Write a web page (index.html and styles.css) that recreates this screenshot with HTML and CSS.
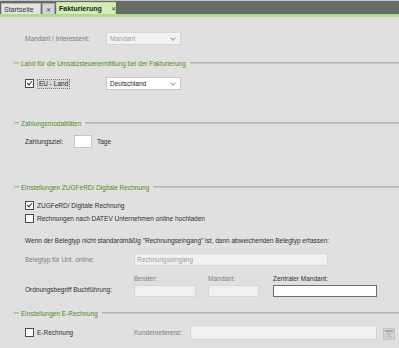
FILE: index.html
```
<!DOCTYPE html>
<html lang="de">
  <head>
    <meta charset="UTF-8" />
    <meta name="viewport" content="width=device-width, initial-scale=1.0" />
    <title>Fakturierung</title>
    <link rel="stylesheet" href="styles.css">
  </head>
  <body>
    <div class="tabbar">
      <div class="tab">Startseite</div>
      <div class="tab-close">&#x2715;</div>
      <div class="tab tab--active">Fakturierung <span class="tab__x">&#x2715;</span></div>
    </div>

    <div class="form">
      <div class="row row--mandant">
        <span class="label label--muted label--wide">Mandant / Interessent:</span>
        <div class="select select--disabled">Mandant <span class="chevron"></span></div>
      </div>

      <div class="section section--1"><span>Land für die Umsatzsteuerermittlung bei der Fakturierung</span></div>
      <div class="row row--land">
        <label class="check check--wide">
          <span class="box box--checked"></span>
          <span class="focus">EU - Land</span>
        </label>
        <div class="select">Deutschland <span class="chevron"></span></div>
      </div>

      <div class="section section--2"><span>Zahlungsmodalitäten</span></div>
      <div class="row row--ziel">
        <span class="label label--short">Zahlungsziel:</span>
        <div class="input input--days"></div>
        <span class="unit">Tage</span>
      </div>

      <div class="section section--3"><span>Einstellungen ZUGFeRD/ Digitale Rechnung</span></div>
      <label class="check row--check1">
        <span class="box box--checked"></span>
        <span>ZUGFeRD/ Digitale Rechnung</span>
      </label>
      <label class="check row--check2">
        <span class="box"></span>
        <span>Rechnungen nach DATEV Unternehmen online hochladen</span>
      </label>
      <p class="hint">Wenn der Belegtyp nicht standardmäßig "Rechnungseingang" ist, dann abweichenden Belegtyp erfassen:</p>
      <div class="row row--beleg">
        <span class="label label--muted label--col">Belegtyp für Unt. online:</span>
        <div class="input input--disabled input--beleg">Rechnungseingang</div>
      </div>
      <div class="ordnung">
        <span class="label ordnung__label">Ordnungsbegriff Buchführung:</span>
        <span class="label label--muted ordnung__berater">Berater:</span>
        <span class="label label--muted ordnung__mandant">Mandant:</span>
        <span class="label ordnung__zentral">Zentraler Mandant:</span>
        <div class="input input--disabled ordnung__in1"></div>
        <div class="input input--disabled ordnung__in2"></div>
        <div class="input input--active ordnung__in3"></div>
      </div>

      <div class="section section--4"><span>Einstellungen E-Rechnung</span></div>
      <div class="row row--erech">
        <label class="check check--col">
          <span class="box"></span>
          <span>E-Rechnung</span>
        </label>
        <span class="label label--muted label--ref">Kundenreferenz:</span>
        <div class="input input--disabled input--ref"></div>
        <div class="icon-btn">
          <svg width="10" height="10" viewBox="0 0 10 10">
            <rect x="1" y="1" width="8" height="2" fill="#a8a8a8" />
            <path d="M2 4 L8 4 L5 7 Z" fill="#b8b8b8" />
            <rect x="3" y="7" width="5" height="2" fill="#c4c4c4" />
          </svg>
        </div>
      </div>
    </div>
  </body>
</html>
```
FILE: styles.css
```
body {
  margin: 0;
  padding: 0;
  background: #e0e0e0;
  font-family: "Liberation Sans", Arial, sans-serif;
  font-size: 6.5px;
  color: #2e2e2e;
  width: 399px;
  height: 348px;
  overflow: hidden;
}

/* tab strip */
.tabbar {
  display: flex;
  align-items: flex-end;
  height: 13px;
  border-top: 1px solid #c4c4c4;
  background: #676b67;
  border-bottom: 3px solid #b2da92;
  padding-left: 1px;
}

.tab {
  height: 11px;
  width: 40px;
  padding-left: 2px;
  box-sizing: border-box;
  background: #e4e4e4;
  border: 1px solid #b8b8b8;
  border-bottom: none;
  display: flex;
  align-items: center;
  color: #333;
  font-size: 7px;
}

.tab-close {
  width: 13px;
  height: 11px;
  margin-left: 1px;
  box-sizing: border-box;
  background: #d4d4d4;
  border: 1px solid #a8a8a8;
  border-bottom: none;
  display: flex;
  align-items: center;
  justify-content: center;
  font-size: 6px;
  color: #444;
}

.tab--active {
  width: 60px;
  height: 12px;
  margin-left: 1px;
  background: #d4ecb6;
  border-color: #c0dca0;
  font-weight: bold;
  color: #222;
  padding-left: 2px;
}

.tab__x {
  margin-left: 9px;
  font-weight: normal;
  font-size: 6px;
  color: #444;
}

/* form */
.form {
  padding-left: 25px;
}

.row {
  display: flex;
  align-items: center;
}

.label--wide {
  width: 81px;
}

.label--short {
  width: 49px;
}

.label--col {
  width: 109px;
}

.label--muted {
  color: #7c7c7c;
}

.row--mandant {
  margin-top: 15px;
  height: 13px;
}

.select {
  position: relative;
  width: 75px;
  height: 13px;
  box-sizing: border-box;
  border: 1px solid #c6c6c6;
  background: #fff;
  padding-left: 3px;
  display: flex;
  align-items: center;
  color: #222;
}

.select--disabled {
  background: #f2f2f2;
  border-color: #d6d6d6;
  color: #a4a4a4;
}

.chevron {
  position: absolute;
  right: 5px;
  top: 3px;
  width: 3px;
  height: 3px;
  border-right: 1px solid #a0a0a0;
  border-bottom: 1px solid #a0a0a0;
  transform: rotate(45deg);
}

/* section headings */
.section {
  display: flex;
  align-items: center;
  height: 10px;
  margin-left: -11px;
  color: #4f8b26;
}

.section::before,
.section::after {
  content: "";
  height: 1px;
  border-top: 1px solid #b2b2b2;
  background: #cacaca;
}

.section::before {
  width: 5px;
  margin-right: 2px;
}

.section::after {
  flex: 1;
  margin-left: 4px;
}

.section--1 {
  margin-top: 13px;
}

.section--2 {
  margin-top: 28px;
}

.section--3 {
  margin-top: 34px;
}

.section--4 {
  margin-top: 11px;
}

/* checkboxes */
.check {
  display: flex;
  align-items: center;
  height: 10px;
  gap: 3px;
}

.check--wide {
  width: 81px;
}

.check--col {
  width: 109px;
}

.box {
  width: 9px;
  height: 9px;
  box-sizing: border-box;
  border: 1px solid #4a4a4a;
  background: #fff;
  position: relative;
}

.box--checked::after {
  content: "";
  position: absolute;
  left: 2px;
  top: 0px;
  width: 2px;
  height: 4px;
  border-right: 1px solid #333;
  border-bottom: 1px solid #333;
  transform: rotate(40deg);
}

.focus {
  border: 1px dotted #777;
  background: #d8d8d8;
  padding: 0 1px;
  line-height: 8px;
}

.row--land {
  margin-top: 9px;
  height: 13px;
}

.row--ziel {
  margin-top: 7px;
  height: 13px;
}

.input {
  height: 13px;
  box-sizing: border-box;
  border: 1px solid #c4c4c4;
  background: #fff;
}

.input--days {
  width: 18px;
}

.unit {
  margin-left: 5px;
}

.row--check1 {
  margin-top: 8px;
}

.row--check2 {
  margin-top: 3px;
}

.hint {
  margin: 13px 0 0;
  height: 10px;
  line-height: 10px;
}

.row--beleg {
  margin-top: 7px;
  height: 13px;
}

.input--disabled {
  background: #f0f0f0;
  border-color: #d6d6d6;
  color: #9c9c9c;
  padding-left: 2px;
  display: flex;
  align-items: center;
}

.input--beleg {
  width: 194px;
}

/* Ordnungsbegriff grid */
.ordnung {
  display: grid;
  grid-template-columns: 109px 74px 65px 104px;
  grid-template-rows: 10px 12px;
  row-gap: 2px;
  margin-top: 7px;
  align-items: center;
}

.ordnung__label {
  grid-row: 2;
  grid-column: 1;
  margin-top: -3px;
}

.ordnung__berater { grid-row: 1; grid-column: 2; }
.ordnung__mandant { grid-row: 1; grid-column: 3; }
.ordnung__zentral { grid-row: 1; grid-column: 4; }

.ordnung .input {
  height: 12px;
  grid-row: 2;
}

.ordnung__in1 { grid-column: 2; width: 62px; }
.ordnung__in2 { grid-column: 3; width: 51px; }
.ordnung__in3 { grid-column: 4; width: 104px; }

.input--active {
  border-color: #6e6e6e;
}

.row--erech {
  margin-top: 7px;
  height: 15px;
}

.label--ref {
  width: 56px;
}

.input--ref {
  width: 187px;
  height: 15px;
}

.icon-btn {
  width: 12px;
  height: 12px;
  margin-left: 6px;
  margin-top: 3px;
  background: #d2d2d2;
  border: 1px solid #c4c4c4;
  box-sizing: border-box;
  display: flex;
  align-items: center;
  justify-content: center;
}
```
